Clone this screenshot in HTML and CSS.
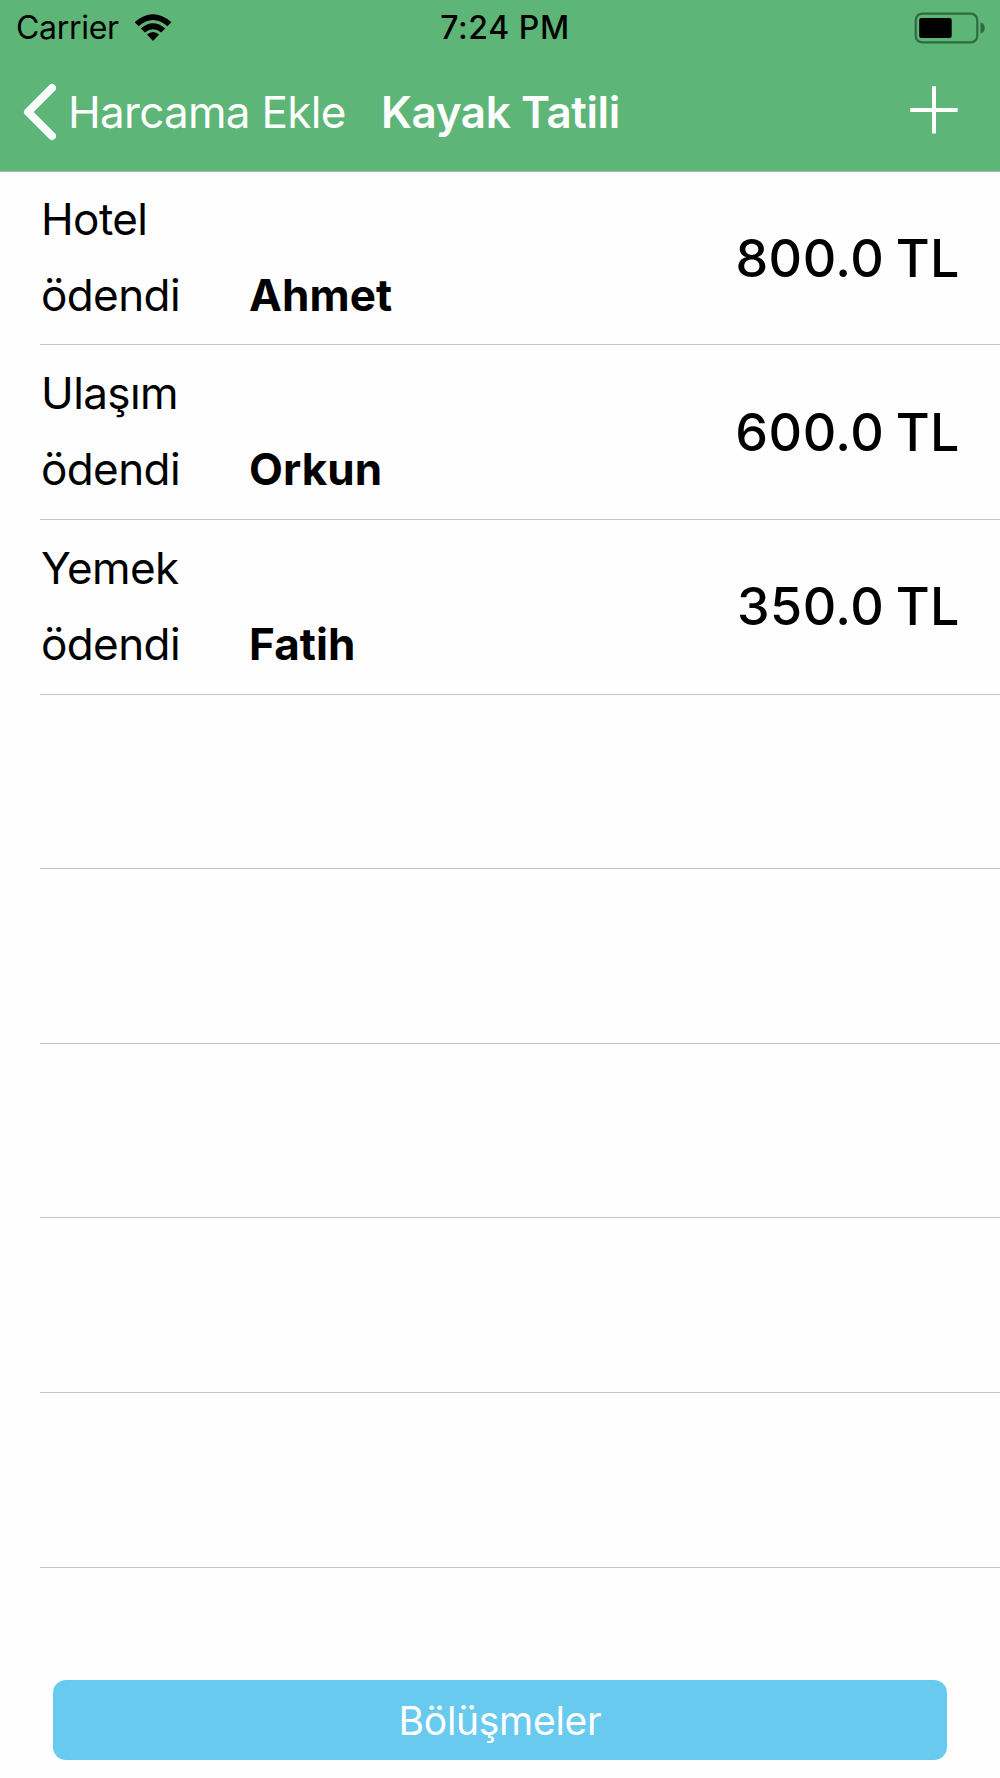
FILE: index.html
```
<!DOCTYPE html>
<html lang="tr">
<head>
    <meta charset="UTF-8">
    <meta name="viewport" content="width=device-width, initial-scale=1.0">
    <title>Kayak Tatili</title>
    <link rel="stylesheet" href="styles.css">
</head>
<body>
    <div class="screen">
        <header class="header">
            <div class="status-bar">
                <div class="status-left">
                    <span class="carrier">Carrier</span>
                    <svg class="wifi" width="38" height="28" viewBox="0 0 38 28">
                        <path d="M0.6 8.2 Q19 -7.6 37.4 8.2 L33.4 12.3 Q19 -0.4 4.6 12.3 Z"/>
                        <path d="M6.7 14.4 Q19 4 31.3 14.4 L27.2 18.5 Q19 12 10.8 18.5 Z"/>
                        <path d="M12.9 20.6 Q19 15.2 25.1 20.6 L19 27 Z"/>
                    </svg>
                </div>
                <span class="time">7:24 PM</span>
                <svg class="battery" width="72" height="32" viewBox="0 0 72 32">
                    <rect class="battery-case" x="1.7" y="1.7" width="61.6" height="28.6" rx="6.5"/>
                    <rect x="5.2" y="6" width="32.5" height="20" rx="2"/>
                    <path class="battery-tip" d="M66.5 10.2 Q70.8 12 70.8 16 Q70.8 20 66.5 21.8 Z"/>
                </svg>
            </div>
            <nav class="nav-bar">
                <a class="back" href="#">
                    <svg class="chevron" width="34" height="58" viewBox="0 0 34 58">
                        <path d="M30 5 L6 29 L30 53"/>
                    </svg>
                    <span class="back-title">Harcama Ekle</span>
                </a>
                <h1 class="title">Kayak Tatili</h1>
                <a class="add" href="#">
                    <svg width="48" height="48" viewBox="0 0 48 48">
                        <path d="M0.3 24 H47.6 M24 0.3 V47.6"/>
                    </svg>
                </a>
            </nav>
        </header>

        <ul class="expenses">
            <li class="expense">
                <div class="info">
                    <div class="name">Hotel</div>
                    <div class="paid"><span class="label">ödendi</span><b class="person">Ahmet</b></div>
                </div>
                <div class="amount">800.0 TL</div>
            </li>
            <li class="expense">
                <div class="info">
                    <div class="name">Ulaşım</div>
                    <div class="paid"><span class="label">ödendi</span><b class="person">Orkun</b></div>
                </div>
                <div class="amount">600.0 TL</div>
            </li>
            <li class="expense">
                <div class="info">
                    <div class="name">Yemek</div>
                    <div class="paid"><span class="label">ödendi</span><b class="person">Fatih</b></div>
                </div>
                <div class="amount">350.0 TL</div>
            </li>
            <li class="expense"></li>
            <li class="expense"></li>
            <li class="expense"></li>
            <li class="expense"></li>
            <li class="expense"></li>
        </ul>

        <footer class="footer">
            <button class="split-button">Bölüşmeler</button>
        </footer>
    </div>
</body>
</html>
```

FILE: styles.css
```
* {
    box-sizing: border-box;
}

body {
    margin: 0;
    background: #fefefe;
    color: #000;
    font-family: Inter, sans-serif;
    font-size: 44px;
}

.screen {
    display: flex;
    flex-direction: column;
    width: 1000px;
    height: 1778px;
}

.header {
    height: 172px;
    background: #5db677;
    border-bottom: 1px solid #a5b9aa;
}

.status-bar {
    display: grid;
    grid-template-columns: 1fr auto 1fr;
    align-items: center;
    height: 55px;
    padding: 0 14px 0 16px;
    font-size: 32px;
    line-height: 55px;
}

.status-left {
    display: flex;
    align-items: center;
}

.carrier {
    width: 118px;
    letter-spacing: -0.3px;
}

.time {
    padding-left: 8px;
    font-weight: 500;
    letter-spacing: 0.6px;
}

.battery {
    justify-self: end;
}

.battery-case {
    fill: none;
    stroke: #2f6b41;
    stroke-width: 2.2;
}

.battery-tip {
    fill: #2f6b41;
}

.nav-bar {
    display: flex;
    align-items: center;
    height: 114px;
    padding: 0 42px 0 22px;
    color: #fff;
    line-height: 114px;
    white-space: nowrap;
}

.back {
    display: flex;
    align-items: center;
    width: 359px;
    color: #fff;
    text-decoration: none;
}

.chevron,
.add svg {
    fill: none;
    stroke: #fff;
}

.chevron path {
    stroke-width: 8;
    stroke-linecap: round;
    stroke-linejoin: round;
}

.back-title {
    margin-left: 12px;
    font-weight: 400;
    letter-spacing: -0.7px;
}

.title {
    margin: 0;
    font-size: 44px;
    font-weight: 600;
    letter-spacing: -0.4px;
}

.add {
    display: flex;
    margin-left: auto;
    padding-bottom: 4px;
}

.add path {
    stroke-width: 4;
}

.expenses {
    flex: 1;
    margin: 0;
    padding: 0 0 0 40px;
    list-style: none;
}

.expense {
    display: flex;
    align-items: center;
    justify-content: space-between;
    height: 174.6px;
    padding-right: 40px;
    border-bottom: 1.5px solid #c4c4c7;
}

.expense:first-child {
    height: 173.4px;
}

.info {
    padding: 0 0 2px 1px;
    font-weight: 400;
    line-height: 76px;
    letter-spacing: -0.6px;
}

.paid {
    display: flex;
}

.label {
    width: 208px;
}

.person {
    font-weight: 700;
    letter-spacing: 0.1px;
}

.amount {
    font-size: 52px;
    font-weight: 500;
    letter-spacing: 0.5px;
    word-spacing: -3px;
}

.footer {
    padding: 0 53px 18px;
}

.split-button {
    display: block;
    width: 100%;
    height: 80px;
    padding: 0;
    border: none;
    border-radius: 13px;
    background: #69caef;
    color: #fff;
    font-family: inherit;
    font-size: 39px;
    font-weight: 400;
    letter-spacing: -0.3px;
}
```
